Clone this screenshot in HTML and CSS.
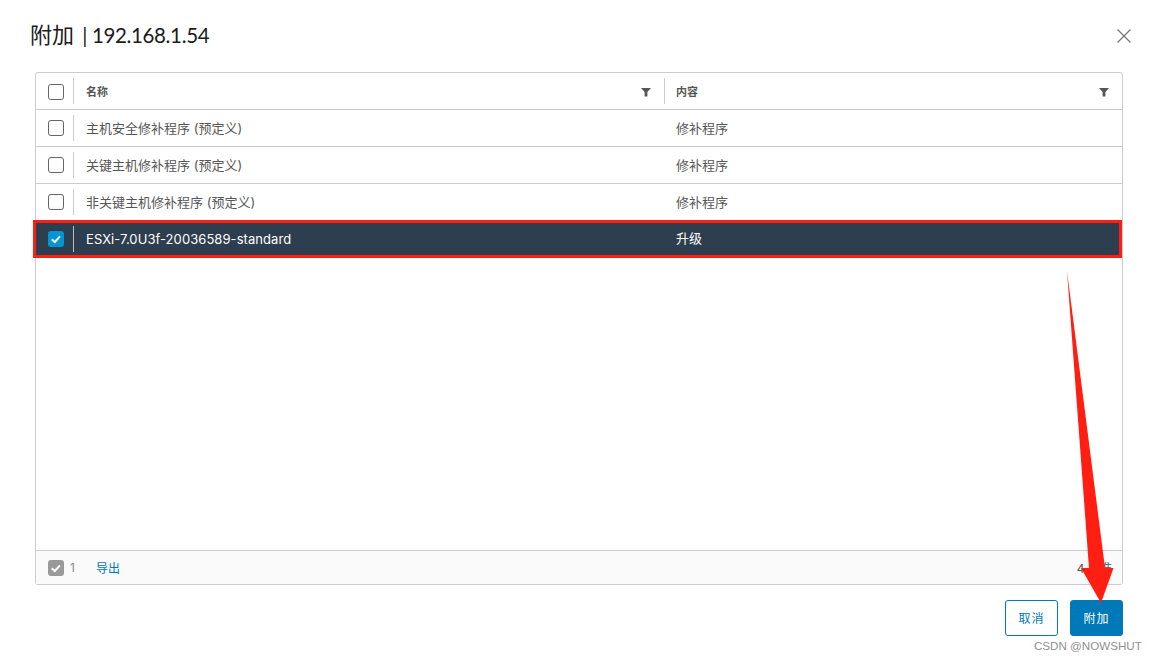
FILE: index.html
```html
<!DOCTYPE html>
<html lang="zh-CN">
<head>
  <title>附加</title>
  <meta charset="UTF-8">
  <link rel="stylesheet" href="styles.css">
</head>
<body>
  <div class="dialog">
    <div class="dialog-head">
      <h1 class="dialog-title">附加 <span class="title-host">| 192.168.1.54</span></h1>
      <svg class="close-icon" width="14" height="14" viewBox="0 0 14 14">
        <path d="M0.5 0.5 L13.5 13.5 M13.5 0.5 L0.5 13.5" stroke="#747474" stroke-width="1.2" fill="none"/>
      </svg>
    </div>

    <div class="grid">
      <div class="row head-row">
        <div class="cell check-cell"><span class="check"></span></div>
        <div class="cell name-cell">名称
          <svg class="filter" width="10" height="10" viewBox="0 0 10 10"><path d="M0 1 H10 L6.4 5 V9.5 H3.6 V5 Z" fill="#565656"/></svg>
        </div>
        <div class="cell value-cell">内容
          <svg class="filter" width="10" height="10" viewBox="0 0 10 10"><path d="M0 1 H10 L6.4 5 V9.5 H3.6 V5 Z" fill="#565656"/></svg>
        </div>
      </div>
      <div class="row">
        <div class="cell check-cell"><span class="check"></span></div>
        <div class="cell name-cell">主机安全修补程序 (预定义)</div>
        <div class="cell value-cell">修补程序</div>
      </div>
      <div class="row">
        <div class="cell check-cell"><span class="check"></span></div>
        <div class="cell name-cell">关键主机修补程序 (预定义)</div>
        <div class="cell value-cell">修补程序</div>
      </div>
      <div class="row">
        <div class="cell check-cell"><span class="check"></span></div>
        <div class="cell name-cell">非关键主机修补程序 (预定义)</div>
        <div class="cell value-cell">修补程序</div>
      </div>
      <div class="row selected">
        <div class="cell check-cell">
          <span class="check checked">
            <svg width="16" height="16" viewBox="0 0 16 16"><path d="M3.8 8.2 L6.8 11 L12 5.4" stroke="#fff" stroke-width="2" fill="none"/></svg>
          </span>
        </div>
        <div class="cell name-cell">ESXi-7.0U3f-20036589-standard</div>
        <div class="cell value-cell">升级</div>
        <div class="red-box"></div>
      </div>
      <div class="grid-space"></div>
      <div class="grid-foot">
        <span class="check count-check">
          <svg width="16" height="16" viewBox="0 0 16 16"><path d="M3.8 8.2 L6.8 11 L12 5.4" stroke="#fff" stroke-width="2" fill="none"/></svg>
        </span>
        <span class="count">1</span>
        <span class="export">导出</span>
        <span class="total">4 基准</span>
      </div>
    </div>

    <div class="dialog-foot">
      <button class="btn btn-outline">取消</button>
      <button class="btn btn-primary">附加</button>
    </div>
  </div>

  <!-- red arrow drawn on top of the screenshot -->
  <svg class="arrow" width="60" height="340" viewBox="0 0 60 340">
    <path d="M7 1 L45 298 L53.5 298 L41 333 L21 298 L29 298 Z" fill="#ff1e12"/>
  </svg>
  <div class="watermark">CSDN @NOWSHUT</div>
</body>
</html>
```

FILE: styles.css
```css
body {
  margin: 0;
  background-color: #fff;
  font-family: Inter, "Noto Sans CJK SC", sans-serif;
  color: #565656;
  overflow: hidden;
}

.dialog {
  width: 1158px;
  height: 660px;
  padding: 0 35px;
  box-sizing: border-box;
  display: flex;
  flex-direction: column;
}

.dialog-head {
  height: 72px;
  display: flex;
  justify-content: space-between;
}

.dialog-title {
  margin: 20px 0 0 -5px;
  font-size: 22px;
  line-height: 30px;
  font-weight: 400;
  color: #1b1b1b;
}

.title-host {
  font-family: Lato, "Noto Sans CJK SC", sans-serif;
  font-size: 20.5px;
  letter-spacing: -0.35px;
  margin-left: 2px;
  margin-right: 1px;
}

.close-icon {
  margin: 29px -8px 0 0;
}

.grid {
  height: 513px;
  border: 1px solid #ccc;
  border-radius: 3px;
  box-sizing: border-box;
  display: flex;
  flex-direction: column;
}

.row {
  position: relative;
  height: 37px;
  flex: none;
  box-sizing: border-box;
  border-bottom: 1px solid #ccc;
  display: grid;
  grid-template-columns: 38px 591px 1fr;
  font-size: 13px;
}

.cell {
  display: flex;
  align-items: center;
  padding-left: 12px;
  padding-bottom: 2px;
}

.value-cell {
  padding-left: 11px;
}

.check-cell {
  padding-left: 12px;
  padding-bottom: 0;
  position: relative;
}

.check-cell::after {
  content: "";
  position: absolute;
  right: 0;
  top: 5px;
  bottom: 5px;
  width: 1px;
  background-color: #ccc;
}

.check {
  width: 16px;
  height: 16px;
  box-sizing: border-box;
  border: 1px solid #666;
  border-radius: 3px;
  background-color: #fff;
  display: block;
}

.check svg {
  display: block;
}

.checked, .count-check {
  border: none;
  background-color: #0095d3;
}

.head-row {
  height: 37px;
  font-size: 11px;
  font-weight: 700;
  color: #565656;
}

.head-row .check-cell {
  padding-top: 1px;
}

.head-row .name-cell {
  position: relative;
  border-right: 1px solid #ccc;
  margin: 5px 0;
  justify-content: space-between;
  padding-right: 13px;
  padding-bottom: 1px;
}

.head-row .value-cell {
  justify-content: space-between;
  padding-right: 13px;
  padding-bottom: 1px;
}

.filter {
  margin-top: 3px;
}

.selected {
  background-color: #2d3e4f;
  color: #fff;
  letter-spacing: 0.07px;
}

.selected .name-cell {
  padding-bottom: 0;
}

.selected .value-cell {
  padding-bottom: 4px;
}

.selected .check-cell::after {
  background-color: #b5bcc3;
}

.red-box {
  position: absolute;
  left: -3px;
  top: -1px;
  right: 0;
  bottom: -1px;
  border: 3px solid #ff1e12;
}

.grid-space {
  flex: 1;
}

.grid-foot {
  height: 34px;
  flex: none;
  box-sizing: border-box;
  border-top: 1px solid #ccc;
  background-color: #fafafa;
  display: flex;
  align-items: center;
  padding: 0 10px 0 12px;
  font-size: 12px;
}

.count-check {
  background-color: #9a9a9a;
}

.count {
  margin-left: 6px;
  width: 26px;
  color: #8c8c8c;
}

.export {
  color: #0079b8;
}

.total {
  margin-left: auto;
}

.dialog-foot {
  display: flex;
  justify-content: flex-end;
  gap: 12px;
  margin-top: 15px;
}

.btn {
  width: 53px;
  height: 36px;
  border-radius: 3px;
  font-family: inherit;
  font-size: 12px;
  letter-spacing: 1px;
  padding: 0 0 2px;
}

.btn-outline {
  border: 1px solid #0079b8;
  background-color: #fff;
  color: #0079b8;
}

.btn-primary {
  border: 1px solid #0079b8;
  background-color: #0079b8;
  color: #fff;
}

.arrow {
  position: absolute;
  left: 1060px;
  top: 270px;
}

.watermark {
  position: absolute;
  left: 1034px;
  top: 638px;
  font-family: "Liberation Sans", sans-serif;
  font-size: 11.6px;
  line-height: 16px;
  color: #8f8f8f;
}
```
